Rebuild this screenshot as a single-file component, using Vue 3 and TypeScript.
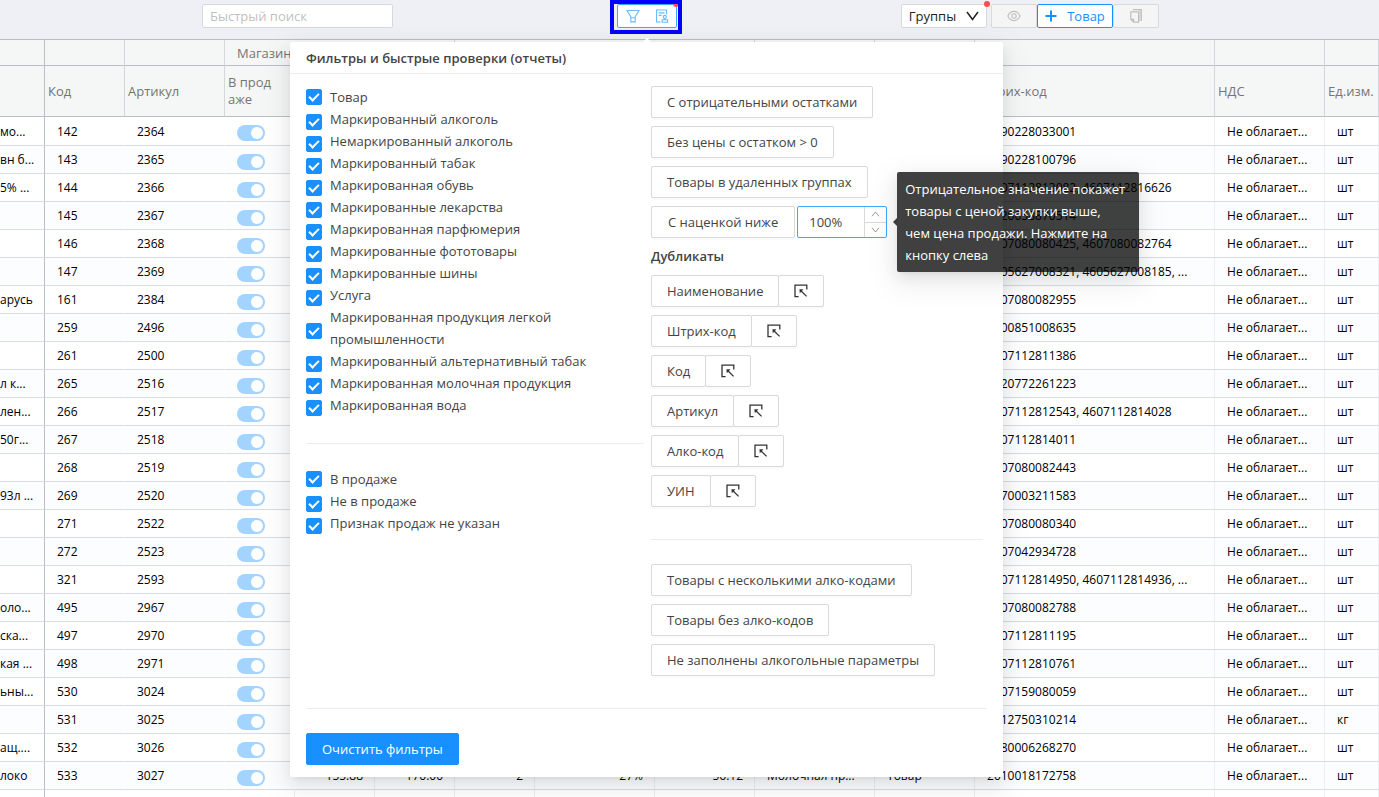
<script setup lang="ts">
import { ref } from 'vue'

interface Row {
  name: string
  code: string
  article: string
  barcode: string
  unit: string
  extra?: string[]
}

interface Check {
  label: string
  checked: boolean
}

function row(name: string, code: string, article: string, barcode: string, unit = 'шт', extra?: string[]): Row {
  return { name, code, article, barcode, unit, extra }
}

const rows: Row[] = [
  row('мо...', '142', '2364', '4690228033001'),
  row('вн б...', '143', '2365', '4690228100796'),
  row('5% ...', '144', '2366', '4607112813082, 4607112816626'),
  row('', '145', '2367', '4620058870514'),
  row('', '146', '2368', '4607080080425, 4607080082764'),
  row('', '147', '2369', '4605627008321, 4605627008185, ...'),
  row('арусь', '161', '2384', '4607080082955'),
  row('', '259', '2496', '4600851008635'),
  row('', '261', '2500', '4607112811386'),
  row('л к...', '265', '2516', '4620772261223'),
  row('лен...', '266', '2517', '4607112812543, 4607112814028'),
  row('50г...', '267', '2518', '4607112814011'),
  row('', '268', '2519', '4607080082443'),
  row('93л ...', '269', '2520', '4670003211583'),
  row('', '271', '2522', '4607080080340'),
  row('', '272', '2523', '4607042934728'),
  row('', '321', '2593', '4607112814950, 4607112814936, ...'),
  row('оло...', '495', '2967', '4607080082788'),
  row('ска...', '497', '2970', '4607112811195'),
  row('кая ...', '498', '2971', '4607112810761'),
  row('ьны...', '530', '3024', '4607159080059'),
  row('', '531', '3025', '4612750310214', 'кг'),
  row('ащ....', '532', '3026', '4680006268270'),
  row('локо', '533', '3027', '2010018172758', 'шт', ['155.88', '170.00', '2', '27%', '56.12', 'Молочная пр...', 'Товар']),
]

const checks = (labels: string[]): Check[] => labels.map((label) => ({ label, checked: true }))

const kinds = ref<Check[]>(
  checks([
    'Товар',
    'Маркированный алкоголь',
    'Немаркированный алкоголь',
    'Маркированный табак',
    'Маркированная обувь',
    'Маркированные лекарства',
    'Маркированная парфюмерия',
    'Маркированные фототовары',
    'Маркированные шины',
    'Услуга',
    'Маркированная продукция легкой промышленности',
    'Маркированный альтернативный табак',
    'Маркированная молочная продукция',
    'Маркированная вода',
  ]),
)
const sales = ref<Check[]>(checks(['В продаже', 'Не в продаже', 'Признак продаж не указан']))

const quick = ['С отрицательными остатками', 'Без цены с остатком > 0', 'Товары в удаленных группах']
const duplicates = ['Наименование', 'Штрих-код', 'Код', 'Артикул', 'Алко-код', 'УИН']
const alcohol = ['Товары с несколькими алко-кодами', 'Товары без алко-кодов', 'Не заполнены алкогольные параметры']

const search = ref('')
const margin = ref(100)

function setMargin(e: Event) {
  margin.value = parseInt((e.target as HTMLInputElement).value) || 0
}
function clearFilters() {
  for (const c of [...kinds.value, ...sales.value]) c.checked = false
}
</script>

<template>
  <div class="page">
    <header class="toolbar">
      <input v-model="search" class="search" type="text" placeholder="Быстрый поиск" aria-label="Быстрый поиск" />

      <div class="highlight">
        <div class="filter-group">
          <button type="button" aria-label="Фильтры">
            <svg width="14" height="14" viewBox="0 0 14 14" fill="none" stroke="currentColor" stroke-width="1.1">
              <path d="M1 1.5h12L9.2 7.7v5.2H4.8V7.7z M4.8 8.7h4.4" />
            </svg>
          </button>
          <button type="button" aria-label="Быстрые проверки">
            <svg width="14" height="14" viewBox="0 0 14 14" fill="none" stroke="currentColor" stroke-width="1.1">
              <path d="M5.6 13H1.6V1h10v4.6 M3.6 3.9h6 M3.6 6.4h3" />
              <circle cx="9.8" cy="7.9" r="1.5" />
              <path d="M9.8 9.4v1.2 M7.2 10.8h5.4v2.4H7.2z" />
            </svg>
          </button>
          <span class="corner"></span>
        </div>

        <section class="popover" aria-label="Фильтры и быстрые проверки (отчеты)">
          <h2 class="popover-title">Фильтры и быстрые проверки (отчеты)</h2>
          <div class="popover-body">
            <div class="columns">
              <div class="left">
                <div class="checks">
                  <label v-for="c in kinds" :key="c.label" class="check">
                    <input v-model="c.checked" type="checkbox" /><span>{{ c.label }}</span>
                  </label>
                </div>
                <hr class="left-rule" />
                <div class="checks">
                  <label v-for="c in sales" :key="c.label" class="check">
                    <input v-model="c.checked" type="checkbox" /><span>{{ c.label }}</span>
                  </label>
                </div>
              </div>
              <div class="right">
                <button v-for="q in quick" :key="q" type="button" class="btn">{{ q }}</button>
                <div class="margin-row">
                  <button type="button" class="btn">С наценкой ниже</button>
                  <div class="number">
                    <input type="text" :value="margin + '%'" aria-label="Наценка" @change="setMargin" />
                    <div class="steps">
                      <button type="button" aria-label="Больше" @click="margin++">
                        <svg width="9" height="6" viewBox="0 0 9 6"><path d="M1 5.2 4.5 1 8 5.2" /></svg>
                      </button>
                      <button type="button" aria-label="Меньше" @click="margin--">
                        <svg width="9" height="6" viewBox="0 0 9 6"><path d="M1 .8 4.5 5 8 .8" /></svg>
                      </button>
                    </div>
                    <div class="tooltip" role="tooltip">Отрицательное значение покажет<br />товары с ценой закупки выше,<br />чем цена продажи. Нажмите на<br />кнопку слева</div>
                  </div>
                </div>
                <h3 class="subtitle">Дубликаты</h3>
                <div v-for="d in duplicates" :key="d" class="pair">
                  <button type="button" class="btn">{{ d }}</button>
                  <button type="button" class="btn pick" :aria-label="'Выбрать: ' + d">
                    <svg width="14" height="14" viewBox="0 0 14 14" fill="none" stroke="currentColor" stroke-width="1.3">
                      <path d="M4.600 12.600H1V1.200h11.800v4.200" />
                      <path d="M6.400 6.200l6.200 6.200" />
                      <path d="M5.400 5.200h4L5.800 9.200z" fill="currentColor" stroke="none" />
                    </svg>
                  </button>
                </div>
                <hr class="right-rule" />
                <button v-for="a in alcohol" :key="a" type="button" class="btn">{{ a }}</button>
              </div>
            </div>
            <hr class="foot-rule" />
            <button type="button" class="btn primary" @click="clearFilters">Очистить фильтры</button>
          </div>
        </section>
      </div>

      <button type="button" class="tool groups">
        <span>Группы</span>
        <svg width="13" height="10" viewBox="0 0 13 10" fill="none" stroke="currentColor" stroke-width="1.5"><path d="M1 1l5.5 7.5L12 1" /></svg>
        <i class="dot"></i>
      </button>
      <button type="button" class="tool off eye" disabled aria-label="Просмотр">
        <svg width="14" height="12" viewBox="0 0 14 12" fill="none" stroke="currentColor" stroke-width="1.1">
          <path d="M.8 6C2.2 3 4.4 1.4 7 1.4S11.8 3 13.2 6C11.8 9 9.600 10.600 7 10.600S2.200 9 .8 6z" />
          <circle cx="7" cy="6" r="2.200" />
        </svg>
      </button>
      <button type="button" class="tool add">
        <svg width="12" height="12" viewBox="0 0 12 12" fill="none" stroke="currentColor" stroke-width="2"><path d="M6 .5v11M.5 6h11" /></svg>
        <span>Товар</span>
      </button>
      <button type="button" class="tool off copy" disabled aria-label="Копировать">
        <svg width="12" height="14" viewBox="0 0 12 14" fill="none" stroke="currentColor" stroke-width="1.2">
          <path d="M.8 2.800h7.800v10.400H3.600L.8 10.400z M.8 10.400h2.800v2.800" />
          <path d="M2.800.7h8.500v11.200" />
          <path d="M9.900 1.200v10.700" stroke-width="1.800" opacity=".5" />
        </svg>
      </button>
    </header>

    <table class="grid">
      <colgroup>
        <col class="w45" /><col class="w80" /><col class="w100" /><col class="w70" /><col class="w80" /><col class="w80" />
        <col class="w80" /><col class="w120" /><col class="w100" /><col class="w120" /><col class="w100" /><col class="w240" />
        <col class="w110" /><col />
      </colgroup>
      <thead>
        <tr class="group-row">
          <th class="pin"></th><th></th><th></th>
          <th colspan="3" class="group">Магазин 1</th><th colspan="3"></th>
          <th></th><th></th><th></th><th></th><th></th>
        </tr>
        <tr class="head-row">
          <th class="pin"></th><th>Код</th><th>Артикул</th><th class="breaks">В продаже</th>
          <th></th><th></th><th></th><th></th><th></th><th></th><th></th>
          <th>Штрих-код</th><th>НДС</th><th>Ед.изм.</th>
        </tr>
      </thead>
      <tbody>
        <tr v-for="r in rows" :key="r.code">
          <td class="pin name">{{ r.name }}</td>
          <td class="plain">{{ r.code }}</td>
          <td class="plain">{{ r.article }}</td>
          <td class="sw"><button type="button" class="switch" role="switch" aria-checked="true" :aria-label="'В продаже: ' + r.code"></button></td>
          <td v-for="n in 7" :key="n" :class="{ num: n < 6 }">{{ r.extra?.[n - 1] }}</td>
          <td>{{ r.barcode }}</td>
          <td>Не облагает...</td>
          <td>{{ r.unit }}</td>
        </tr>
        <tr class="tail">
          <td class="pin"></td><td class="plain"></td><td class="plain"></td><td v-for="n in 11" :key="n"></td>
        </tr>
      </tbody>
    </table>
  </div>
</template>

<style>
body {
  margin: 0;
}
</style>

<style scoped>
* {
  box-sizing: border-box;
}
.page {
  height: 100vh;
  overflow: hidden;
  background: #fff;
  color: #444;
  font: 13px/22px "Open Sans", "Noto Sans", sans-serif;
}
button,
input {
  font: inherit;
  color: inherit;
  margin: 0;
}
button {
  cursor: pointer;
}
button:focus,
input:focus {
  outline: none;
}
hr {
  border: 0;
  border-top: 1px solid #ececec;
  margin: 0;
}

/* toolbar */
.toolbar {
  display: flex;
  align-items: flex-start;
  height: 39px;
  padding-left: 202px;
  background: #eff0f5;
}
.search {
  width: 191px;
  height: 24px;
  margin-top: 4px;
  padding: 0 7px;
  border: 1px solid #d9d9d9;
  border-radius: 2px;
  background: #fff;
}
.search::placeholder {
  color: #bfbfbf;
}
.highlight {
  position: relative;
  width: 72px;
  height: 34px;
  margin-left: 217px;
  padding: 0 1px 0 3px;
  border: 4px solid #0000ff;
}
.filter-group {
  position: relative;
  display: flex;
  height: 24px;
  border: 1px solid #40a9ff;
  border-radius: 2px;
  background: #fff;
  color: #69b9fb;
}
.filter-group button {
  display: flex;
  flex: 1;
  align-items: center;
  justify-content: center;
  padding: 0;
  border: 0;
  background: none;
}
.corner {
  position: absolute;
  top: -1px;
  right: -2px;
  width: 5px;
  height: 3px;
  border-radius: 0 0 2px 4px;
  background: #ff4d4f;
}
.tool {
  position: relative;
  display: flex;
  align-items: center;
  justify-content: center;
  height: 24px;
  margin-top: 4px;
  padding: 0;
  border: 1px solid #d9d9d9;
  border-radius: 2px;
  background: #fff;
}
.groups {
  width: 86px;
  margin-left: 219px;
  gap: 10px;
  color: #222;
}
.dot {
  position: absolute;
  top: -4px;
  right: -4px;
  width: 6px;
  height: 6px;
  border-radius: 50%;
  background: #ff4d4f;
}
.off {
  width: 46px;
  background: #f5f5f5;
  color: #bfbfbf;
  cursor: default;
}
.eye {
  margin-left: 4px;
}
.add {
  width: 76px;
  gap: 10px;
  border-color: #1890ff;
  color: #1890ff;
}

/* popover */
.popover {
  position: absolute;
  z-index: 2;
  top: 38px;
  left: 50%;
  width: 713px;
  margin-left: -356px;
  border-radius: 2px;
  background: #fff;
  box-shadow: 0 3px 6px -4px rgba(0, 0, 0, 0.12), 0 6px 16px 0 rgba(0, 0, 0, 0.08), 0 9px 28px 8px rgba(0, 0, 0, 0.05);
}
.popover::before {
  content: "";
  position: absolute;
  top: -4px;
  left: 352px;
  border: 5px solid transparent;
  border-top: 0;
  border-bottom-color: #fff;
}
.popover-title {
  margin: 0;
  padding: 5px 16px 4px;
  border-bottom: 1px solid #ececec;
  font-size: 13px;
  line-height: 22px;
  font-weight: 600;
  color: #444;
}
.popover-body {
  padding: 12px 16px;
}
.columns {
  display: flex;
  gap: 7px;
}
.left {
  width: 338px;
}
.check {
  display: flex;
  align-items: center;
  gap: 8px;
}
.check input {
  appearance: none;
  flex: none;
  width: 16px;
  height: 16px;
  border: 1px solid #d9d9d9;
  border-radius: 2px;
  background: #fff;
}
.check input:checked {
  border-color: #1890ff;
  background: #1890ff;
}
.check input:checked::after {
  content: "";
  display: block;
  box-sizing: border-box;
  width: 6px;
  height: 10px;
  margin: 1px 0 0 4px;
  border: solid #fff;
  border-width: 0 2px 2px 0;
  transform: rotate(45deg);
}
.check:not(:first-child) input {
  margin-top: 6px;
}
.left-rule {
  margin: 27px 0 24px;
}
.right {
  display: flex;
  flex: 1;
  flex-direction: column;
  align-items: flex-start;
  gap: 8px;
  padding-right: 4px;
}
.btn {
  height: 32px;
  padding: 0 15px;
  border: 1px solid #d9d9d9;
  border-radius: 2px;
  background: #fff;
  white-space: nowrap;
  box-shadow: 0 2px 0 rgba(0, 0, 0, 0.015);
}
.margin-row {
  display: flex;
  gap: 2px;
}
.margin-row .btn {
  padding: 0 16px;
}
.number {
  position: relative;
  display: flex;
  width: 90px;
  height: 32px;
  border: 1px solid #40a9ff;
  border-radius: 2px;
}
.number input {
  flex: 1;
  min-width: 0;
  padding: 0 0 0 11px;
  border: 0;
  background: none;
}
.steps {
  display: flex;
  flex-direction: column;
  width: 22px;
  border-left: 1px solid #d9d9d9;
}
.steps button {
  display: flex;
  flex: 1;
  align-items: center;
  justify-content: center;
  padding: 0;
  border: 0;
  background: none;
}
.steps button + button {
  border-top: 1px solid #d9d9d9;
}
.steps path {
  fill: none;
  stroke: #999;
}
.tooltip {
  position: absolute;
  z-index: 3;
  top: -35px;
  left: 99px;
  width: 242px;
  padding: 6px 8px;
  border-radius: 2px;
  background: rgba(0, 0, 0, 0.75);
  color: #fff;
  font-weight: 500;
  white-space: nowrap;
  box-shadow: 0 3px 6px -4px rgba(0, 0, 0, 0.12), 0 6px 16px 0 rgba(0, 0, 0, 0.08), 0 9px 28px 8px rgba(0, 0, 0, 0.05);
}
.tooltip::before {
  content: "";
  position: absolute;
  top: 46px;
  left: -4px;
  border: 4px solid transparent;
  border-left: 0;
  border-right-color: rgba(0, 0, 0, 0.75);
}
.subtitle {
  margin: 0;
  font-size: 13px;
  line-height: 21px;
  font-weight: 600;
}
.pair {
  display: flex;
}
.pick {
  display: flex;
  align-items: center;
  margin-left: -1px;
  color: #333;
}
.right-rule {
  align-self: stretch;
  margin: 24px 0 16px;
}
.foot-rule {
  margin: 32px 0 24px;
}
.primary {
  border-color: #1890ff;
  background: #1890ff;
  color: #fff;
}

/* grid */
.grid {
  width: 100%;
  border-collapse: separate;
  border-spacing: 0;
  border-top: 1px solid #babfc7;
  table-layout: fixed;
}
.w45 { width: 45px; }
.w70 { width: 70px; }
.w80 { width: 80px; }
.w100 { width: 100px; }
.w110 { width: 110px; }
.w120 { width: 120px; }
.w240 { width: 240px; }
th {
  padding: 0 3px;
  border-right: 1px solid #d3d7dc;
  border-bottom: 1px solid #babfc7;
  background: #f5f7f7;
  color: #757575;
  font-weight: 400;
  text-align: left;
  overflow: hidden;
  white-space: nowrap;
}
.group-row th {
  height: 26px;
}
.group-row .group {
  padding-left: 12px;
}
.head-row th {
  height: 51px;
}
.head-row .breaks {
  padding-right: 18px;
  line-height: 17px;
  white-space: normal;
  word-break: break-all;
}
td {
  height: 28px;
  padding: 1px 11px 0 12px;
  border-right: 1px solid #eceef1;
  border-bottom: 1px solid #d9dcde;
  color: #000;
  font-size: 12px;
  line-height: 18px;
  overflow: hidden;
  white-space: nowrap;
}
tbody tr:first-child td {
  height: 29px;
  padding-top: 2px;
}
tbody tr:nth-child(even) td {
  background: #fcfdfe;
}
th.pin,
td.pin {
  border-right-color: #babfc7;
}
td.name {
  padding-left: 0;
  padding-right: 0;
}
td.plain,
td.sw {
  border-right-color: transparent;
}
td.num {
  text-align: right;
}
tbody tr.tail td {
  background: #fff;
}
tbody tr td.sw {
  padding-top: 4px;
}
.switch {
  display: block;
  width: 28px;
  height: 16px;
  padding: 2px;
  border: 0;
  border-radius: 8px;
  background: #a3d3ff;
}
.switch::after {
  content: "";
  display: block;
  width: 12px;
  height: 12px;
  margin-left: 12px;
  border-radius: 50%;
  background: #fff;
}
</style>
